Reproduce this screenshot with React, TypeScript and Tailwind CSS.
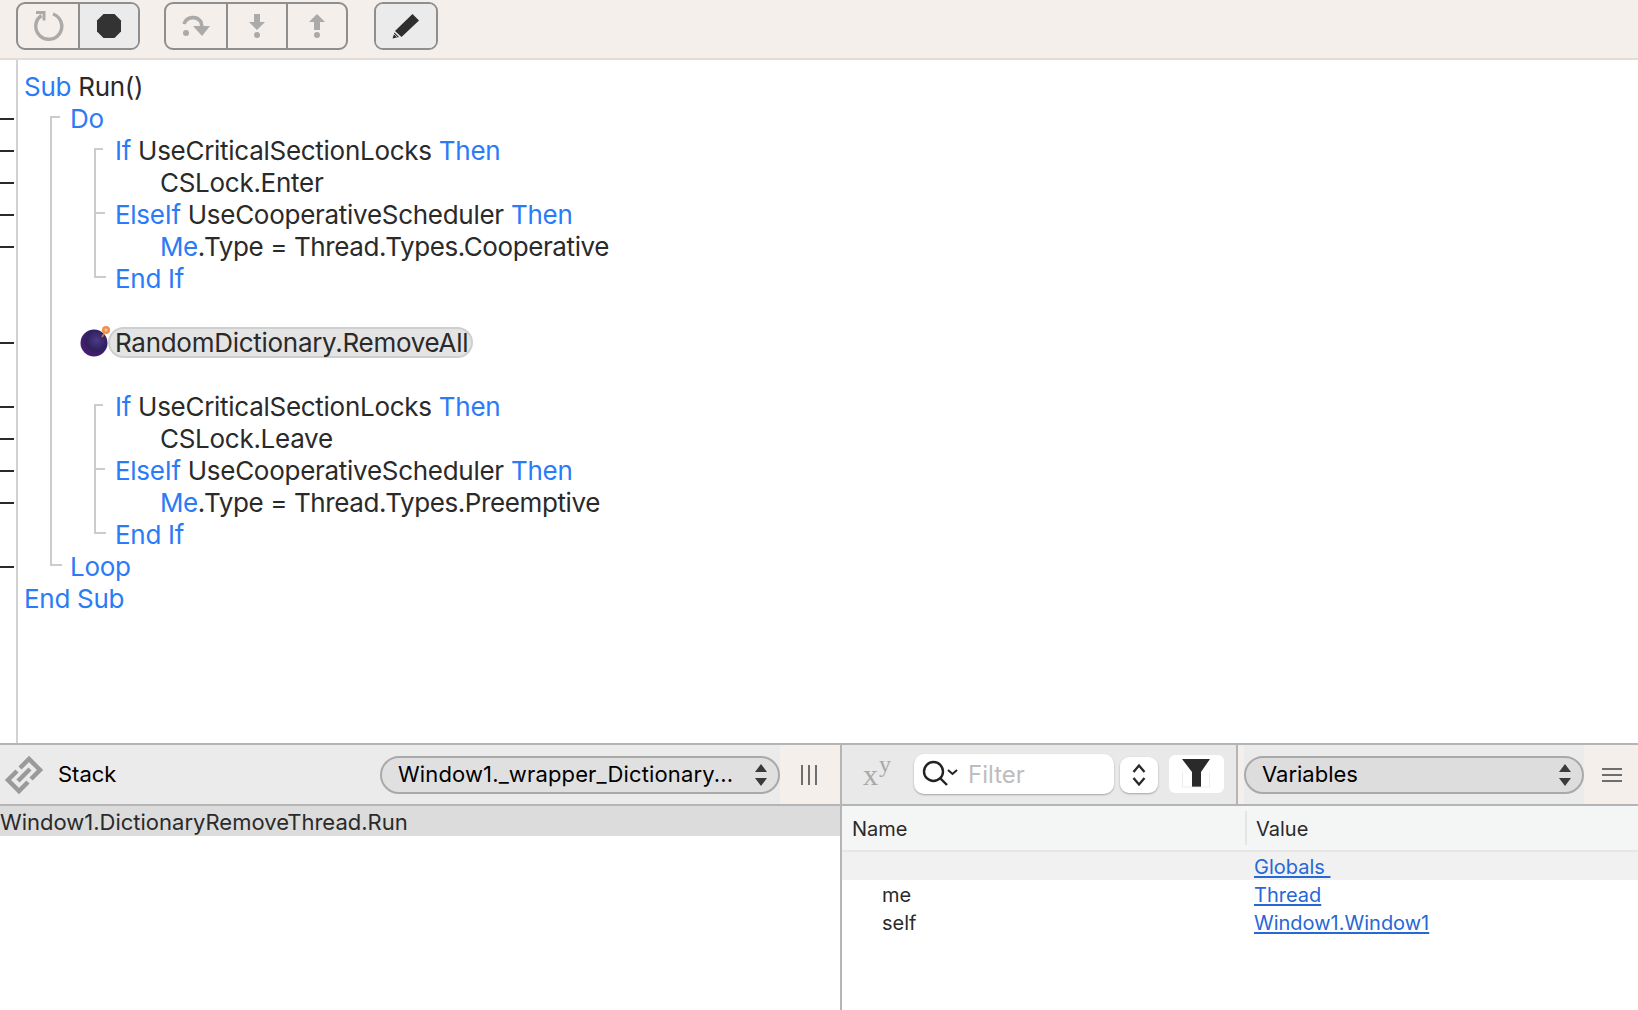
const K = ({ children }: { children: string }) => <span className="text-[#2a7bf6]">{children}</span>

type Row = { indent: number; dash: boolean; body?: React.ReactNode }

const rows: Row[] = [
  { indent: 0, dash: false, body: <><K>Sub</K> Run()</> },
  { indent: 1, dash: true, body: <K>Do</K> },
  { indent: 2, dash: true, body: <><K>If</K> UseCriticalSectionLocks <K>Then</K></> },
  { indent: 3, dash: true, body: "CSLock.Enter" },
  { indent: 2, dash: true, body: <><K>ElseIf</K> UseCooperativeScheduler <K>Then</K></> },
  { indent: 3, dash: true, body: <span className="tracking-[-0.4px]"><K>Me</K>.Type = Thread.Types.Cooperative</span> },
  { indent: 2, dash: false, body: <K>End If</K> },
  { indent: 0, dash: false },
  { indent: 2, dash: true, body: "bomb" },
  { indent: 0, dash: false },
  { indent: 2, dash: true, body: <><K>If</K> UseCriticalSectionLocks <K>Then</K></> },
  { indent: 3, dash: true, body: "CSLock.Leave" },
  { indent: 2, dash: true, body: <><K>ElseIf</K> UseCooperativeScheduler <K>Then</K></> },
  { indent: 3, dash: true, body: <span className="tracking-[-0.4px]"><K>Me</K>.Type = Thread.Types.Preemptive</span> },
  { indent: 2, dash: false, body: <K>End If</K> },
  { indent: 1, dash: true, body: <K>Loop</K> },
  { indent: 0, dash: false, body: <K>End Sub</K> },
]

const indentClass = ["pl-[6px]", "pl-[52px]", "pl-[97px]", "pl-[142px]"]

function Bomb() {
  return (
    <svg width="32" height="34" viewBox="0 0 32 34" className="absolute left-[-30px] top-[-6px]">
      <defs>
        <radialGradient id="bomb" cx="0.6" cy="0.4" r="0.75">
          <stop offset="0" stopColor="#4d3a86" />
          <stop offset="0.5" stopColor="#30205f" />
          <stop offset="1" stopColor="#5a1a7e" />
        </radialGradient>
      </defs>
      <circle cx="14" cy="20" r="13.5" fill="url(#bomb)" />
      <circle cx="26" cy="7" r="4" fill="#f0904a" />
      <circle cx="26" cy="7" r="1.4" fill="#f8c79a" />
      <path d="M24 11l-2 3" stroke="#b9763f" strokeWidth="2" />
    </svg>
  )
}

function CodeLine({ row }: { row: Row }) {
  return (
    <div className={`h-8 leading-8 whitespace-pre ${indentClass[row.indent]}`}>
      {row.body === "bomb" ? (
        <span className="relative ml-[-7px] inline-block h-[31px] rounded-full border-2 border-[#cfcfcf] bg-[#e4e4e4] pl-[5px] pr-[3px] leading-[27px]">
          <Bomb />
          RandomDictionary.RemoveAll
        </span>
      ) : (
        row.body
      )}
    </div>
  )
}

function ToolButton({ children, w, active, last }: { children: React.ReactNode; w: string; active?: boolean; last?: boolean }) {
  return (
    <div className={`flex items-center justify-center ${w} ${active ? "bg-[#ebebeb]" : ""} ${last ? "" : "border-r-2 border-[#8e8e8e]"}`}>
      {children}
    </div>
  )
}

function Group({ children, className = "" }: { children: React.ReactNode; className?: string }) {
  return <div className={`flex h-[48px] overflow-hidden rounded-[9px] border-2 border-[#8e8e8e] ${className}`}>{children}</div>
}

function Arrows() {
  return (
    <svg width="14" height="24" viewBox="0 0 14 24">
      <path d="M7 1l6 8H1zM7 23l-6-8h12z" fill="#3a3a3a" />
    </svg>
  )
}

export default function App() {
  return (
    <div className="flex h-[1010px] w-[1638px] flex-col overflow-hidden bg-white font-['Inter',sans-serif] text-[#2a2a2a]">
      {/* toolbar */}
      <div className="flex h-[60px] shrink-0 items-start border-b-2 border-[#e2ddd8] bg-[#f4efeb] pl-[16px] pt-[2px]">
        <Group>
          <ToolButton w="w-[62px]">
            <svg width="36" height="36" viewBox="0 0 36 36" fill="none" stroke="#aaaaaa" strokeWidth="3.4" className="ml-[3px]">
              <path d="M9.5 7.5A13 13 0 1 0 21 6" />
              <path d="M4 4.5h8v8" strokeWidth="3" />
            </svg>
          </ToolButton>
          <ToolButton w="w-[58px]" active last>
            <svg width="26" height="26" viewBox="0 0 26 26">
              <path d="M7.5 1h11L25 7.5v11L18.5 25h-11L1 18.5v-11z" fill="#333333" />
            </svg>
          </ToolButton>
        </Group>
        <Group className="ml-[24px]">
          <ToolButton w="w-[62px]">
            <svg width="30" height="24" viewBox="0 0 30 24" fill="none" className="ml-[1px]">
              <circle cx="4" cy="19" r="3" fill="#aaaaaa" />
              <path d="M2 10A9.5 9.5 0 0 1 19 8l1 5" stroke="#aaaaaa" strokeWidth="3.6" />
              <path d="M11 12h17l-8 10z" fill="#aaaaaa" />
            </svg>
          </ToolButton>
          <ToolButton w="w-[60px]">
            <svg width="18" height="24" viewBox="0 0 18 24">
              <path d="M6 0h6v8h5l-8 8-8-8h5z" fill="#aaaaaa" />
              <circle cx="9" cy="21" r="3" fill="#aaaaaa" />
            </svg>
          </ToolButton>
          <ToolButton w="w-[58px]" last>
            <svg width="18" height="24" viewBox="0 0 18 24">
              <path d="M9 0l8 8h-5v8H6V8H1z" fill="#aaaaaa" />
              <circle cx="9" cy="21" r="3" fill="#aaaaaa" />
            </svg>
          </ToolButton>
        </Group>
        <Group className="ml-[26px]">
          <ToolButton w="w-[60px]" active last>
            <svg width="28" height="26" viewBox="0 0 28 26">
              <path d="M20.5 1L27 7.5 9.500 24 3 18z" fill="#2e2e2e" />
              <path d="M2.500 19.500L7 24l-6.500 1.500z" fill="#2e2e2e" />
              <path d="M1.500 20.500L5.500 24.500" stroke="#f4efeb" strokeWidth="0.8" />
            </svg>
          </ToolButton>
        </Group>
      </div>

      {/* editor */}
      <div className="flex min-h-0 flex-1">
        <div className="w-[18px] shrink-0 border-r-2 border-[#d2d2d2] pt-[11px]">
          {rows.map((row, i) => (
            <div key={i} className="flex h-8 items-center">
              {row.dash && <div className="h-[2px] w-[14px] bg-[#2a2a2a]" />}
            </div>
          ))}
        </div>
        <div className="relative flex-1 pt-[11px] text-[26px] tracking-[-0.28px]">
          {rows.map((row, i) => (
            <CodeLine key={i} row={row} />
          ))}
          <svg className="absolute left-0 top-0" width="120" height="560" fill="none" stroke="#cccccc" strokeWidth="2">
            <path d="M42 57H33V505H44" />
            <path d="M85 89H77V217H88M77 153H87" />
            <path d="M85 345H77V473H88M77 409H87" />
          </svg>
        </div>
      </div>

      {/* bottom panels */}
      <div className="flex h-[267px] shrink-0 border-t-2 border-[#b5b5b5] text-[22px]">
        <div className="flex w-[842px] shrink-0 flex-col border-r-2 border-[#b5b5b5]">
          <div className="flex h-[61px] shrink-0 items-center border-b-2 border-[#b5b5b5] bg-[#ebebeb]">
            <svg width="42" height="42" viewBox="0 0 42 42" fill="none" stroke="#9a9a9a" strokeWidth="4.5" className="ml-[3px]">
              <path d="M17 14L26 5l11 11-9 9" />
              <path d="M25 28l-9 9L5 26l9-9" />
              <path d="M15 27l12-12" />
            </svg>
            <span className="ml-[13px] text-black">Stack</span>
            <div className="ml-auto flex h-[38px] w-[400px] items-center justify-between rounded-full border-2 border-[#a9a9a9] bg-[#e0e0e0] pl-[16px] pr-[10px] text-black">
              <span className="tracking-[0.14px]">Window1._wrapper_Dictionary...</span>
              <Arrows />
            </div>
            <div className="flex h-full w-[60px] items-center justify-center bg-[#f4efeb]">
              <svg width="16" height="20" viewBox="0 0 16 20" stroke="#6e6e6e" strokeWidth="2" className="mr-[2px]">
                <path d="M1 0v20M8 0v20M15 0v20" />
              </svg>
            </div>
          </div>
          <div className="h-[30px] shrink-0 bg-[#dcdcdc] pt-[1px] leading-[30px]">Window1.DictionaryRemoveThread.Run</div>
        </div>

        <div className="flex min-w-0 flex-1 flex-col">
          <div className="flex h-[61px] shrink-0 border-b-2 border-[#b5b5b5]">
            <div className="flex w-[396px] shrink-0 items-center border-r-2 border-[#b5b5b5] bg-[#e9e9e9] pl-[21px]">
              <span className="relative w-[51px] font-['Liberation_Serif',serif] text-[30px] leading-none text-[#a8a8a8]">
                x<sup className="absolute left-[16px] top-[-8px] text-[24px] leading-none">y</sup>
              </span>
              <div className="mt-[-2px] flex h-[40px] w-[200px] items-center rounded-[10px] bg-white pl-[8px] text-[24px] text-[#bdbdbd] shadow-[0_1px_2px_rgba(0,0,0,0.3)]">
                <svg width="38" height="28" viewBox="0 0 38 28" fill="none" stroke="#222222" strokeWidth="2.4">
                  <circle cx="11.500" cy="11.500" r="9.500" />
                  <path d="M18 18l7 7" />
                  <path d="M26 10l4.500 4 4.500-4" strokeWidth="2" />
                </svg>
                <span className="ml-[8px] mt-[2px]">Filter</span>
              </div>
              <div className="ml-[6px] flex h-[36px] w-[38px] items-center justify-center rounded-[9px] bg-white shadow-[0_1px_2px_rgba(0,0,0,0.3)]">
                <svg width="14" height="24" viewBox="0 0 14 24" fill="none" stroke="#2a2a2a" strokeWidth="2.400">
                  <path d="M1.500 9L7 2.500 12.500 9M1.500 15L7 21.500 12.500 15" />
                </svg>
              </div>
              <div className="ml-[11px] mt-[-2px] flex h-[38px] w-[55px] items-center justify-center rounded-[6px] bg-white">
                <svg width="30" height="30" viewBox="0 0 30 30" className="mt-[-1px] mr-[2px]">
                  <path d="M1 1h28L20 14v15h-9V14z" fill="#2a2a2a" />
                  <path d="M1.500 14v15h27V14" fill="none" stroke="#e8e8e8" strokeWidth="0.8" />
                </svg>
              </div>
            </div>
            <div className="w-[6px] shrink-0 bg-[#f4efeb]" />
            <div className="flex w-[340px] shrink-0 items-center bg-[#ebebeb]">
              <div className="flex h-[38px] w-full items-center justify-between rounded-full border-2 border-[#a9a9a9] bg-[#dddddd] pl-[16px] pr-[10px] text-black">
                <span>Variables</span>
                <Arrows />
              </div>
            </div>
            <div className="flex flex-1 items-center justify-center bg-[#f4efeb]">
              <svg width="20" height="14" viewBox="0 0 20 14" stroke="#6e6e6e" strokeWidth="2" className="ml-[2px]">
                <path d="M0 1h20M0 7h20M0 13h20" />
              </svg>
            </div>
          </div>
          <div className="flex h-[46px] shrink-0 items-center border-b-2 border-[#e6e6e6] bg-[#f4f5f5] text-[20px]">
            <div className="w-[403px] shrink-0 pl-[10px] pt-[2px]">Name</div>
            <div className="flex h-[34px] items-center border-l-2 border-[#e4e4e4] pl-[9px] pt-[2px]">Value</div>
          </div>
          {[
            { name: "", value: "Globals ", shade: true },
            { name: "me", value: "Thread", shade: false },
            { name: "self", value: "Window1.Window1", shade: false },
          ].map((r) => (
            <div key={r.value} className={`flex h-[28px] shrink-0 items-center pt-[2px] text-[20px] ${r.shade ? "bg-[#f1f1f1]" : ""}`}>
              <div className="w-[412px] shrink-0 pl-[40px]">{r.name}</div>
              <span className="whitespace-pre text-[#2668d6] underline underline-offset-2">{r.value}</span>
            </div>
          ))}
        </div>
      </div>
    </div>
  )
}
